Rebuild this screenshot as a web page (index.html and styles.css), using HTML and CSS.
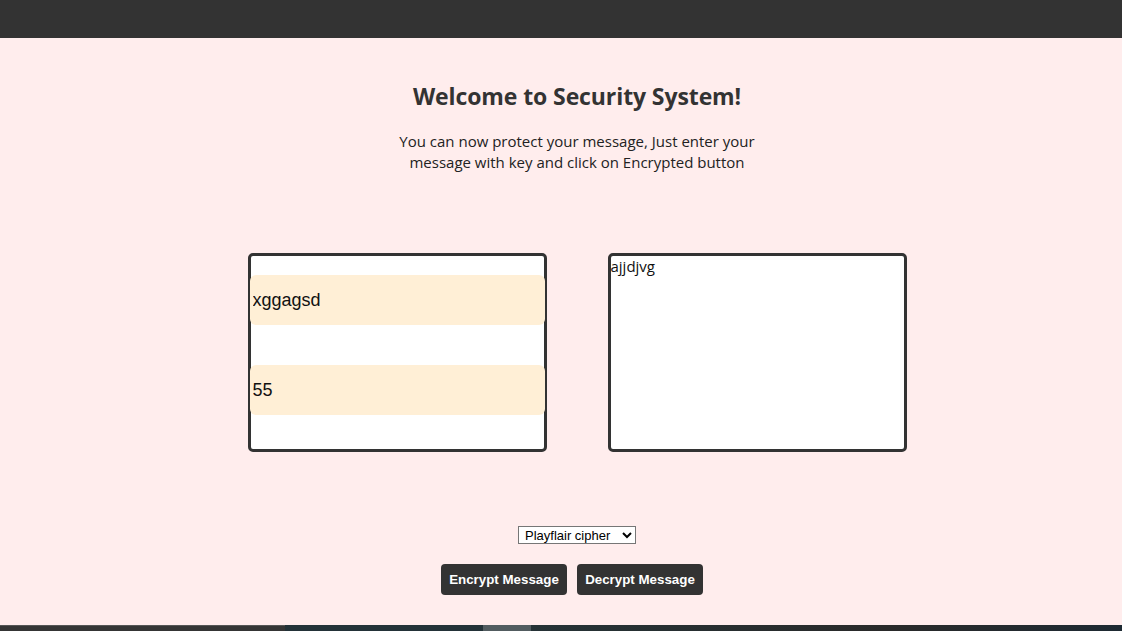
FILE: index.html
```html
<!DOCTYPE html>
<html lang="en">
<head>
<meta charset="utf-8">
<title>Security System</title>
<link rel="stylesheet" href="styles.css">
</head>
<body>
<header class="topbar"></header>
<main class="main">
  <h1 class="title">Welcome to Security System!</h1>
  <p class="intro">You can now protect your message, Just enter your message with key and click on Encrypted button</p>
  <div class="boxes">
    <div class="box box-inputs">
      <input class="field" type="text" value="xggagsd">
      <input class="field" type="text" value="55">
    </div>
    <textarea class="box box-output">ajjdjvg</textarea>
  </div>
  <select class="cipher">
    <option>Playflair cipher</option>
  </select>
  <div class="actions">
    <button class="btn">Encrypt Message</button>
    <button class="btn">Decrypt Message</button>
  </div>
</main>
<div class="taskbar">
  <span class="seg seg-a"></span>
  <span class="seg seg-b"></span>
  <span class="seg seg-c"></span>
  <span class="seg seg-d"></span>
</div>
</body>
</html>
```
FILE: styles.css
```css
* { box-sizing: border-box; }
html, body { margin: 0; padding: 0; }
body {
  height: 631px;
  display: flex;
  flex-direction: column;
  background: #ffeded;
  font-family: "Segoe UI", "Open Sans", "Noto Sans", sans-serif;
  color: #222;
  overflow: hidden;
}
.topbar {
  height: 38px;
  background: #333;
  flex: none;
}
.main {
  flex: 1;
  display: flex;
  flex-direction: column;
  align-items: center;
  padding-left: 32px;
}
.title {
  margin: 42px 0 0;
  font-size: 23px;
  line-height: 32px;
  font-weight: 700;
  color: #333;
  letter-spacing: -0.1px;
}
.intro {
  margin: 19px 0 0;
  width: 380px;
  text-align: center;
  font-size: 15px;
  line-height: 21px;
  color: #222;
}
.boxes {
  margin-top: 80px;
  display: flex;
  gap: 61px;
}
.box {
  width: 299px;
  height: 199px;
  border: 3px solid #333;
  border-radius: 5px;
  background: #fff;
}
.box-inputs {
  display: flex;
  flex-direction: column;
  gap: 40px;
  padding: 19px 0 0;
}
.field {
  display: block;
  width: 295px;
  margin-left: -1px;
  height: 50px;
  border: none;
  border-radius: 6px;
  background: #ffefd6;
  padding: 0 3px;
  font-family: "Liberation Sans", Arial, sans-serif;
  font-size: 18px;
  color: #111;
  outline: none;
}
.box-output {
  resize: none;
  padding: 0;
  font-family: "Segoe UI", "Open Sans", "Noto Sans", sans-serif;
  font-size: 15px;
  line-height: 20px;
  color: #111;
  outline: none;
}
.cipher {
  margin-top: 74px;
  width: 118px;
  height: 18px;
  font-family: "Liberation Sans", Arial, sans-serif;
  font-size: 13px;
  border: 1px solid #767676;
  border-radius: 0;
  background: #fff;
  color: #000;
  padding: 0 2px;
}
.actions {
  margin-top: 20px;
  margin-left: -10px;
  display: flex;
  gap: 10px;
}
.btn {
  width: 126px;
  height: 31px;
  border: none;
  border-radius: 4px;
  background: #333;
  color: #fff;
  font-family: "Liberation Sans", Arial, sans-serif;
  font-weight: 700;
  font-size: 13.33px;
  padding: 0;
}
.taskbar {
  flex: none;
  height: 6px;
  display: flex;
}
.seg { display: block; height: 100%; }
.seg-a { width: 285px; background: #353535; border-top: 1px solid #555; }
.seg-b { width: 198px; background: #233238; }
.seg-c { width: 48px; background: #525c60; }
.seg-d { flex: 1; background: linear-gradient(90deg, #253236, #2a2a2a 60%, #1e2a33); }
```
